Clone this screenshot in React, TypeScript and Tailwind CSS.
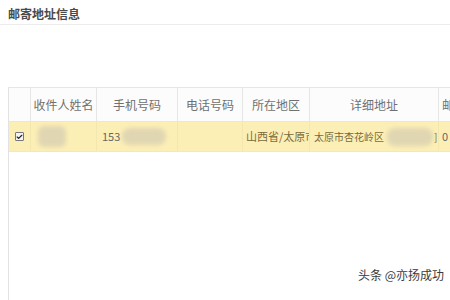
import { Check } from 'lucide-react'

const font = { fontFamily: '"Noto Sans CJK SC", "Noto Sans", sans-serif' }

const COLS = [
  { label: '', w: 'w-[22px]' },
  { label: '收件人姓名', w: 'w-[66px]' },
  { label: '手机号码', w: 'w-[81px]' },
  { label: '电话号码', w: 'w-[65px]' },
  { label: '所在地区', w: 'w-[67px]' },
  { label: '详细地址', w: 'w-[129px]' },
  { label: '邮编', w: 'w-[40px]' },
]

function Blur({ className }: { className: string }) {
  return <div className={`rounded-[6px] bg-[#e0d6b2] blur-[2px] ${className}`} />
}

export default function App() {
  return (
    <div className="w-[450px] h-[300px] bg-white overflow-hidden relative" style={font}>
      {/* Title */}
      <div className="h-[25px] border-b border-[#ececec] pl-[8px]">
        <span className="text-[12px] font-bold text-[#4a4a4a] leading-[20px]">邮寄地址信息</span>
      </div>

      {/* Table */}
      <div className="mt-[62px] ml-[8px] border-l border-[#e2e2e2] h-[213px]">
        {/* Header */}
        <div className="flex h-[35px] border-t border-b border-[#e6e6e6] bg-[#fcfcfc]">
          {COLS.map((c, i) => (
            <div
              key={i}
              className={`${c.w} shrink-0 flex items-center overflow-hidden whitespace-nowrap border-r border-[#e6e6e6] text-[12px] text-[#707070] ${i === 6 ? 'justify-start pl-[3px]' : 'justify-center'}`}
            >
              {c.label}
            </div>
          ))}
        </div>

        {/* Selected row */}
        <div className="flex h-[30px] bg-[#fcefb6] border-b border-[#f5e8b0] text-[10px] text-[#7a6a3a]">
          <div className="w-[22px] shrink-0 flex items-center justify-center border-r border-[#f3e6ae]">
            <div className="w-[9px] h-[9px] bg-[#f4f4f4] border border-[#777] rounded-[1px] flex items-center justify-center">
              <Check size={8} strokeWidth={4} className="text-[#222]" />
            </div>
          </div>
          <div className="w-[66px] shrink-0 flex items-center pl-[7px] border-r border-[#f3e6ae]">
            <Blur className="w-[28px] h-[21px]" />
          </div>
          <div className="w-[81px] shrink-0 flex items-center pl-[5px] gap-[2px] border-r border-[#f3e6ae] text-[11px] text-[#666]">
            <span>153</span>
            <Blur className="w-[44px] h-[17px] rounded-[8px]" />
          </div>
          <div className="w-[65px] shrink-0 border-r border-[#f3e6ae]" />
          <div className="w-[67px] shrink-0 flex items-center pl-[3px] overflow-hidden whitespace-nowrap border-r border-[#f3e6ae] text-[11px]">
            山西省/太原市
          </div>
          <div className="w-[129px] shrink-0 flex items-center pl-[4px] overflow-hidden whitespace-nowrap border-r border-[#f3e6ae]">
            <span>太原市杏花岭区</span>
            <Blur className="ml-[3px] w-[46px] h-[18px] rounded-[8px] shrink-0" />
            <span className="ml-[1px]">]</span>
          </div>
          <div className="w-[40px] shrink-0 flex items-center pl-[3px] text-[11px] text-[#666]">0</div>
        </div>
      </div>

      {/* Watermark */}
      <div className="absolute left-[358px] top-[266px] text-[12px] text-[#3a3a3a] whitespace-nowrap">
        头条 @亦扬成功
      </div>
    </div>
  )
}
